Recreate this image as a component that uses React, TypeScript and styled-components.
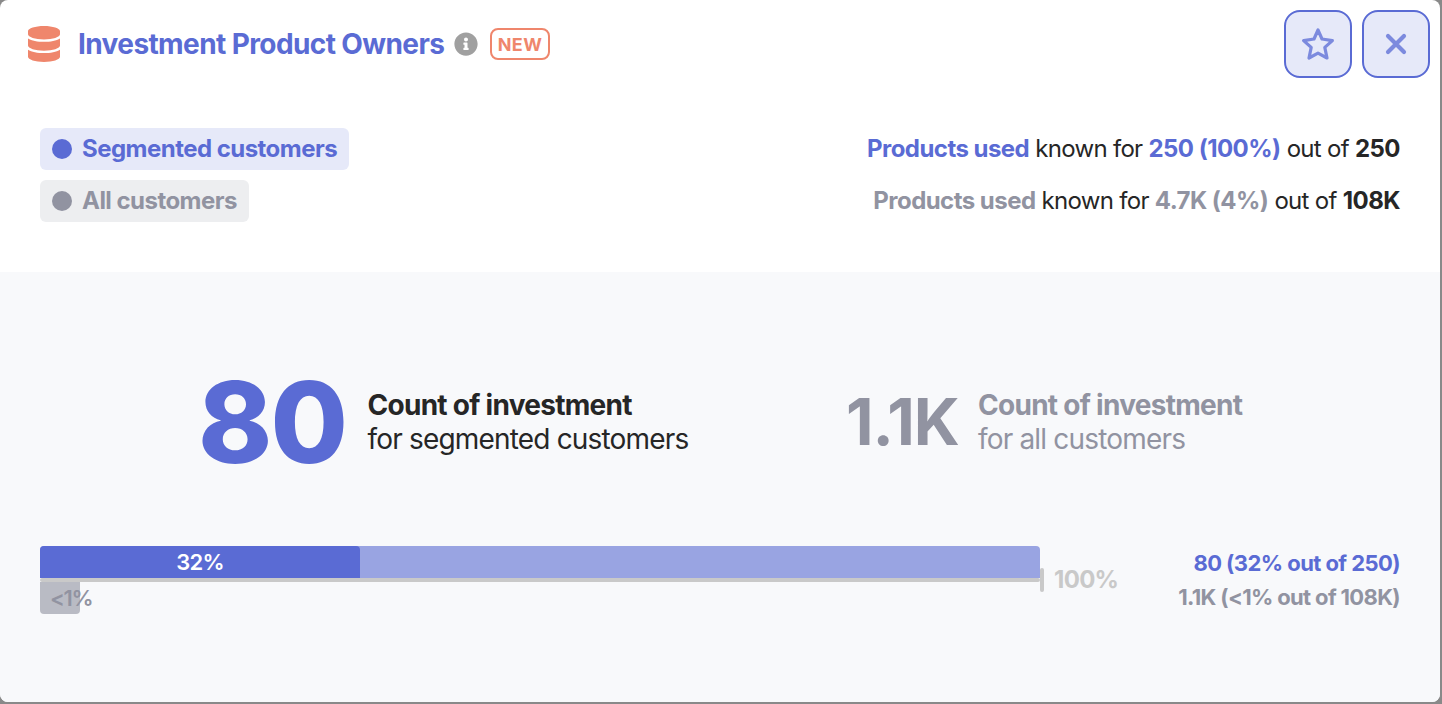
import React from "react";
import styled, { createGlobalStyle } from "styled-components";
import { FaDatabase, FaInfoCircle } from "react-icons/fa";

const GlobalStyle = createGlobalStyle`
  * {
    box-sizing: border-box;
  }
  body {
    margin: 0;
    background-color: #898989;
    font-family: Inter, sans-serif;
    color: #262626;
  }
`;

const Card = styled.div`
  width: 1440px;
  height: 702px;
  background-color: #fff;
  border-radius: 8px;
  overflow: hidden;
  display: flex;
  flex-direction: column;
`;

const Header = styled.header`
  height: 88px;
  padding: 0 10px 0 28px;
  display: flex;
  align-items: center;
  color: #5a6bd4;
`;

const DatabaseIcon = styled(FaDatabase)`
  width: 32px;
  height: 36px;
  color: #ef866c;
`;

const Title = styled.h1`
  width: 366px;
  margin: 0 10px 0 18px;
  font-size: 28px;
  font-weight: 700;
  letter-spacing: -0.6px;
  white-space: nowrap;
`;

const InfoIcon = styled(FaInfoCircle)`
  width: 24px;
  height: 24px;
  color: #a0a0a0;
`;

const NewTag = styled.span`
  width: 60px;
  height: 32px;
  margin-left: 12px;
  border: 2px solid #ef866c;
  border-radius: 8px;
  display: flex;
  align-items: center;
  justify-content: center;
  color: #ef866c;
  font-size: 18px;
  font-weight: 700;
  letter-spacing: 0.4px;
`;

const Actions = styled.div`
  margin-left: auto;
  display: flex;
  gap: 10px;
`;

const ActionButton = styled.button`
  width: 68px;
  height: 68px;
  padding: 0;
  border: 2px solid #5a6bd4;
  border-radius: 16px;
  background-color: #e6e9f9;
  color: #7c8ade;
  display: flex;
  align-items: center;
  justify-content: center;
`;

const ActionIcon = styled.svg`
  width: 36px;
  height: 36px;
  fill: none;
  stroke: currentColor;
  stroke-linecap: round;
  stroke-linejoin: round;
`;

const Summary = styled.section`
  height: 184px;
  padding: 40px 40px 0;
  display: flex;
  flex-direction: column;
  gap: 10px;
`;

const SummaryRow = styled.div`
  height: 42px;
  display: flex;
  align-items: center;
  justify-content: space-between;
`;

const Legend = styled.div<{ $all?: boolean }>`
  height: 42px;
  padding: 0 12px 1px;
  border-radius: 6px;
  background-color: ${(p) => (p.$all ? "#edeef0" : "#e6e9f9")};
  color: ${(p) => (p.$all ? "#9193a1" : "#5a6bd4")};
  display: flex;
  align-items: center;
  gap: 10px;
  font-size: 24px;
  font-weight: 700;
  line-height: 40px;
  letter-spacing: -0.53px;
`;

const Dot = styled.span`
  width: 20px;
  height: 20px;
  margin-top: 1px;
  border-radius: 50%;
  background-color: currentColor;
`;

const Known = styled.p<{ $all?: boolean }>`
  margin: 0 0 2px;
  font-size: 24px;
  letter-spacing: -0.7px;
  b {
    font-weight: 700;
    letter-spacing: -0.54px;
  }
  em {
    font-style: normal;
    font-weight: 700;
    letter-spacing: -0.54px;
    color: ${(p) => (p.$all ? "#9193a1" : "#5a6bd4")};
  }
`;

const Body = styled.section`
  flex: 1;
  padding: 98px 40px 0;
  background-color: #f8f9fb;
`;

const Stats = styled.div`
  height: 104px;
  padding-left: 158px;
  display: flex;
`;

const Stat = styled.div<{ $all?: boolean }>`
  width: ${(p) => (p.$all ? "auto" : "648px")};
  display: flex;
  align-items: center;
  color: ${(p) => (p.$all ? "#9193a1" : "#262626")};
`;

const Value = styled.div<{ $all?: boolean }>`
  width: ${(p) => (p.$all ? "132px" : "169.5px")};
  color: ${(p) => (p.$all ? "#9193a1" : "#5a6bd4")};
  font-size: ${(p) => (p.$all ? "64px" : "112px")};
  font-weight: ${(p) => (p.$all ? 700 : 800)};
  line-height: 104px;
  letter-spacing: ${(p) => (p.$all ? "-1px" : "-2px")};
`;

const Caption = styled.div`
  font-size: 28px;
  line-height: 34px;
  letter-spacing: -0.82px;
  white-space: nowrap;
  b {
    display: block;
    font-weight: 700;
    letter-spacing: -0.72px;
  }
`;

const ChartRow = styled.div`
  margin-top: 72px;
  display: flex;
`;

const Bars = styled.div`
  width: 1004px;
`;

const Track = styled.div`
  width: 1000px;
  height: 32px;
  border-radius: 4px 4px 0 0;
  background-color: #99a4e2;
  overflow: hidden;
`;

const Fill = styled.div`
  height: 100%;
  background-color: #5a6bd4;
  border-radius: 0 4px 0 0;
  color: #fff;
  font-size: 22px;
  font-weight: 600;
  line-height: 32px;
  letter-spacing: -0.8px;
  text-align: center;
`;

const Axis = styled.div`
  width: 1000px;
  height: 4px;
  border-radius: 2px;
  background-color: #c9c9c9;
`;

const SmallBar = styled.div`
  width: 40px;
  height: 32px;
  padding-left: 10px;
  border-radius: 0 0 4px 4px;
  background-color: #b9bbc4;
  color: #9193a1;
  font-size: 22px;
  font-weight: 600;
  line-height: 32px;
  letter-spacing: -1.3px;
  white-space: nowrap;
`;

const AxisEnd = styled.div`
  width: 4px;
  height: 24px;
  margin: 22px 0 0 -4px;
  border-radius: 2px;
  background-color: #c9c9c9;
`;

const AxisLabel = styled.div`
  margin: 18px 0 0 10px;
  color: #c9c9c9;
  font-size: 24px;
  font-weight: 700;
  line-height: 32px;
  letter-spacing: -0.7px;
`;

const Totals = styled.div`
  margin-left: auto;
  color: #9193a1;
  font-size: 22px;
  font-weight: 700;
  line-height: 34px;
  letter-spacing: -0.66px;
  text-align: right;
  div:first-child {
    color: #5a6bd4;
    letter-spacing: -0.56px;
  }
`;

const App = () => {
  return (
    <>
      <GlobalStyle />
      <Card>
        <Header>
          <DatabaseIcon preserveAspectRatio="none" />
          <Title>Investment Product Owners</Title>
          <InfoIcon />
          <NewTag>NEW</NewTag>
          <Actions>
            <ActionButton aria-label="Favorite">
              <ActionIcon viewBox="0 0 36 36" strokeWidth="3.2">
                <path d="M18 4 22 13 32.4 14.6 24.8 21.4 27 32 18 27.2 9 32 11.2 21.4 3.6 14.6 14 13Z" />
              </ActionIcon>
            </ActionButton>
            <ActionButton aria-label="Close">
              <ActionIcon viewBox="0 0 36 36" strokeWidth="4.2">
                <path d="M10 10 26 26M26 10 10 26" />
              </ActionIcon>
            </ActionButton>
          </Actions>
        </Header>
        <Summary>
          <SummaryRow>
            <Legend>
              <Dot />
              Segmented customers
            </Legend>
            <Known>
              <em>Products used</em> known for <em>250 (100%)</em> out of{" "}
              <b>250</b>
            </Known>
          </SummaryRow>
          <SummaryRow>
            <Legend $all>
              <Dot />
              All customers
            </Legend>
            <Known $all>
              <em>Products used</em> known for <em>4.7K (4%)</em> out of{" "}
              <b>108K</b>
            </Known>
          </SummaryRow>
        </Summary>
        <Body>
          <Stats>
            <Stat>
              <Value>80</Value>
              <Caption>
                <b>Count of investment</b>
                for segmented customers
              </Caption>
            </Stat>
            <Stat $all>
              <Value $all>1.1K</Value>
              <Caption>
                <b>Count of investment</b>
                for all customers
              </Caption>
            </Stat>
          </Stats>
          <ChartRow>
            <Bars>
              <Track>
                <Fill style={{ width: "32%" }}>32%</Fill>
              </Track>
              <Axis />
              <SmallBar>&lt;1%</SmallBar>
            </Bars>
            <AxisEnd />
            <AxisLabel>100%</AxisLabel>
            <Totals>
              <div>80 (32% out of 250)</div>
              <div>1.1K (&lt;1% out of 108K)</div>
            </Totals>
          </ChartRow>
        </Body>
      </Card>
    </>
  );
};

export default App;
